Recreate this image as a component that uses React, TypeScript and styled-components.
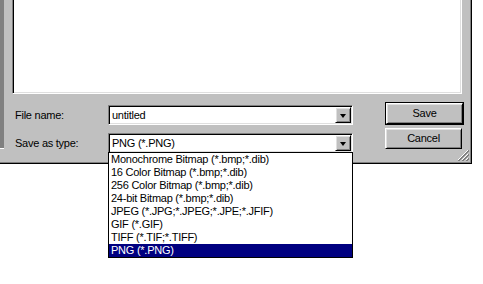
import styled, { createGlobalStyle } from 'styled-components';

const GlobalStyle = createGlobalStyle`
  html, body {
    margin: 0;
    padding: 0;
    height: 100%;
    background: #ffffff;
  }
  #root {
    min-height: 100%;
  }
  * {
    box-sizing: border-box;
  }
`;

const Dialog = styled.div`
  position: relative;
  display: flex;
  width: 472px;
  height: 164px;
  background: #c0c0c0;
  border-right: 1px solid #000;
  border-bottom: 1px solid #000;
  box-shadow: inset -1px -1px #808080;
  font-family: 'Liberation Sans', Arial, sans-serif;
  font-size: 11px;
  letter-spacing: -0.25px;
  color: #000;
`;

const SideStrip = styled.div`
  width: 4px;
  height: 149px;
  background: #808080;
  border-bottom: 1px solid #ffffff;
`;

const Body = styled.div`
  display: flex;
  flex-direction: column;
  padding-left: 8px;
`;

const FileList = styled.div`
  width: 450px;
  height: 94px;
  background: #fff;
  border-style: solid;
  border-width: 0 1px 1px 1px;
  border-color: #808080 #fff #fff #808080;
  box-shadow: inset 1px 0 #000, inset -1px -1px #dfdfdf;
`;

const Form = styled.div`
  display: flex;
  margin-top: 8px;
  padding-left: 3px;
`;

const Fields = styled.div`
  display: grid;
  grid-template-columns: 93px 245px;
  row-gap: 8px;
  margin-top: 3px;
  align-items: center;
`;

const Label = styled.label`
  white-space: nowrap;
  line-height: 13px;
`;

const Combo = styled.div`
  position: relative;
  display: flex;
  align-items: center;
  height: 20px;
  background: #fff;
  border: 1px solid;
  border-color: #808080 #fff #fff #808080;
  box-shadow: inset 1px 1px #000, inset -1px -1px #dfdfdf;
  padding: 1px 1px 1px 3px;
`;

const ComboText = styled.span`
  flex: 1;
  line-height: 13px;
  white-space: nowrap;
`;

const raised = `
  background: #c0c0c0;
  border: 1px solid;
  border-color: #fff #000 #000 #fff;
  box-shadow: inset 1px 1px #dfdfdf, inset -1px -1px #808080;
`;

const DropButton = styled.div`
  ${raised}
  width: 16px;
  height: 16px;
  display: flex;
  align-items: center;
  justify-content: center;
`;

const Arrow = styled.div`
  width: 0;
  height: 0;
  border-left: 3.5px solid transparent;
  border-right: 3.5px solid transparent;
  border-top: 4px solid #000;
  margin-top: 1px;
`;

const DropList = styled.ul`
  position: absolute;
  top: 100%;
  left: -1px;
  width: 245px;
  margin: 0;
  padding: 0;
  list-style: none;
  background: #fff;
  border: 1px solid #000;
  z-index: 2;
`;

const Option = styled.li<{ $selected?: boolean }>`
  height: 13px;
  line-height: 13px;
  padding-left: 2px;
  white-space: nowrap;
  background: ${(p) => (p.$selected ? '#000080' : 'transparent')};
  color: ${(p) => (p.$selected ? '#fff' : '#000')};
`;

const Buttons = styled.div`
  display: flex;
  flex-direction: column;
  gap: 3px;
  margin-left: 32px;
`;

const DefaultFrame = styled.div`
  border: 1px solid #000;
`;

const Button = styled.button`
  ${raised}
  width: 77px;
  height: 21px;
  padding: 0;
  font: inherit;
  letter-spacing: inherit;
  color: #000;
  line-height: 13px;
`;

const Grip = styled.svg`
  position: absolute;
  right: 2px;
  bottom: 2px;
`;

const types = [
  'Monochrome Bitmap (*.bmp;*.dib)',
  '16 Color Bitmap (*.bmp;*.dib)',
  '256 Color Bitmap (*.bmp;*.dib)',
  '24-bit Bitmap (*.bmp;*.dib)',
  'JPEG (*.JPG;*.JPEG;*.JPE;*.JFIF)',
  'GIF (*.GIF)',
  'TIFF (*.TIF;*.TIFF)',
  'PNG (*.PNG)',
];

export default function App() {
  return (
    <>
      <GlobalStyle />
      <Dialog>
        <SideStrip />
        <Body>
          <FileList />
          <Form>
            <Fields>
              <Label>File name:</Label>
              <Combo>
                <ComboText>untitled</ComboText>
                <DropButton>
                  <Arrow />
                </DropButton>
              </Combo>
              <Label>Save as type:</Label>
              <Combo>
                <ComboText>PNG (*.PNG)</ComboText>
                <DropButton>
                  <Arrow />
                </DropButton>
                <DropList>
                  {types.map((t) => (
                    <Option key={t} $selected={t === 'PNG (*.PNG)'}>
                      {t}
                    </Option>
                  ))}
                </DropList>
              </Combo>
            </Fields>
            <Buttons>
              <DefaultFrame>
                <Button>Save</Button>
              </DefaultFrame>
              <Button>Cancel</Button>
            </Buttons>
          </Form>
        </Body>
        <Grip width="12" height="12" viewBox="0 0 12 12">
          <path d="M11 1 L1 11 M11 5 L5 11 M11 9 L9 11" stroke="#fff" strokeWidth="1" />
          <path d="M12 1 L1 12 M12 2 L2 12 M12 5 L5 12 M12 6 L6 12 M12 9 L9 12 M12 10 L10 12" stroke="#808080" strokeWidth="1" />
        </Grip>
      </Dialog>
    </>
  );
}
